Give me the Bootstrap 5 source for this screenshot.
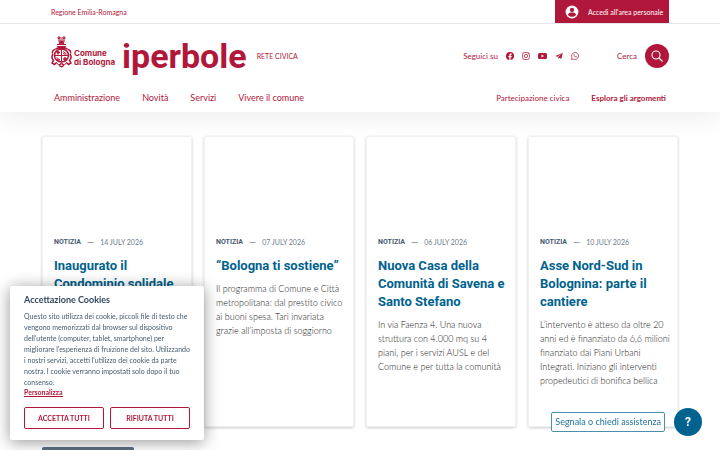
<!DOCTYPE html>
<html lang="it">
<head>
<meta charset="utf-8">
<meta name="viewport" content="width=device-width, initial-scale=1">
<title>Comune di Bologna - Iperbole</title>
<link href="https://cdn.jsdelivr.net/npm/bootstrap@5.3.0/dist/css/bootstrap.min.css" rel="stylesheet">
<style>
:root { --brand: #b1173a; --blue: #00628e; --slate: #455b71; }
body { font-family: Lato, "Open Sans", sans-serif; font-size: 9px; line-height: 14px; color: #5a6470; background: #fff; overflow: hidden; }
a { text-decoration: none; }
.page-wrap { padding: 0 42px; }
.head-inner { padding: 0 51px; }
.slim { border-bottom: 1px solid #e4e6e9; height: 24px; font-size: 7px; }
.slim-link { color: var(--brand); }
.login { background: var(--brand); color: #fff; width: 114px; padding-left: 10px; gap: 9px; }
.site-head { box-shadow: 0 6px 24px rgba(0,0,0,.07); height: 112px; }
.brand-bar { height: 63px; }
.red, .red:hover { color: var(--brand); }
.city { font: 700 8px/9px Inter, sans-serif; color: var(--brand); margin-left: 2px; padding-top: 5px; }
.logo-word { font-family: Roboto, sans-serif; font-size: 34px; line-height: 40px; font-weight: 700; color: var(--brand); margin-left: 7px; }
.civic { font-size: 7px; margin-left: 10px; }
.follow { gap: 8px; }
.follow, .find { font-size: 8px; }
.follow-label { font-size: 8px; }
.socials { gap: 8px; }
.socials a { display: flex; color: var(--brand); }
.find { gap: 8px; margin-left: 38px; }
.find-btn { width: 24px; height: 24px; background: var(--brand); }
.main-nav { gap: 22px; padding: 4px 3px 0; font-size: 9px; }
.minor { font-size: 8px; }
.cards { --bs-gutter-x: 12px; padding-top: 24px; }
.news { min-height: 291px; border: 1px solid #f0f1f2; border-radius: 2px; box-shadow: 0 1px 3px rgba(0,0,0,.2); padding: 98px 4px 0 11px; }
.meta { font-size: 7px; line-height: 14px; gap: 6px; color: #6d7c8b; }
.meta b { font-family: Roboto, sans-serif; color: var(--slate); font-weight: 700; }
.dash { font-size: 9px; }
.news-title { font-family: Roboto, sans-serif; font-size: 13px; line-height: 18px; font-weight: 700; margin: 8px 0 7px; }
.news-title a { color: var(--blue); }
.news-text { color: #222; font-weight: 300; margin: 0; }
.more { background: #5b6f82; width: 92px; height: 24px; border-radius: 2px; margin-top: 20px; }
.cookie { left: 10px; bottom: 10px; width: 194px; padding: 8px 14px 11px; background: #fff; border-radius: 2px; box-shadow: 0 2px 16px rgba(0,0,0,.42); font-size: 7px; line-height: 11px; color: var(--slate); }
.cookie h2 { font-size: 9px; line-height: 12px; font-weight: 700; margin: 0 0 5px; color: #30475e; }
.customise { display: table; font-weight: 700; border-bottom: 1px solid var(--brand); line-height: 8px; }
.choices { gap: 6px; margin-top: 10px; }
.choice { font-size: 7px; line-height: 12px; font-weight: 700; color: var(--brand); border: 1px solid var(--brand); border-radius: 2px; padding: 4px 0; height: 22px; flex: 1 1 0; }
.help { right: 18px; bottom: 14px; gap: 9px; }
.help-label { border: 1px solid #4a90ae; border-radius: 2px; background: #fff; color: #23739a; font-size: 9px; line-height: 18px; padding: 0 3px; }
.help-btn { width: 28px; height: 28px; background: var(--blue); color: #fff; font-weight: 700; font-size: 12px; font-family: Roboto, sans-serif; }
</style>
<script src="https://cdn.jsdelivr.net/npm/bootstrap@5.3.0/dist/js/bootstrap.bundle.min.js"></script>
</head>
<body>
<header class="site-head">
  <div class="slim head-inner d-flex justify-content-between align-items-center">
    <a class="slim-link" href="#">Regione Emilia-Romagna</a>
    <a class="login h-100 d-flex align-items-center" href="#">
      <svg width="14" height="14" viewBox="0 0 24 24"><circle cx="12" cy="12" r="11" fill="#fff"/><circle cx="12" cy="8.5" r="3.7" fill="#b1173a"/><path d="M5 16.5c1.500-3 4-3.500 7-3.500s5.500.5 7 3.500c-1.500 2.300-4 3.500-7 3.500s-5.500-1.200-7-3.500z" fill="#b1173a"/></svg>
      <span>Accedi all'area personale</span>
    </a>
  </div>
  <div class="brand-bar head-inner d-flex justify-content-between align-items-center">
    <div class="d-flex align-items-center">
      <a class="d-flex align-items-center" href="#">
        <svg width="21" height="32" viewBox="0 0 42 64" fill="none" stroke="#b1173a" stroke-width="2" class="mb-2">
          <path d="M14 2h4v3h-4zM24 2h4v3h-4zM14 8h14M16 9l1 7h8l1-7M19 4h4M12 17h18M13 20l3 6h10l3-6"/>
          <path d="M19 11h4v3h-4zM14 24l-5 2M28 24l5 2" stroke-width="3"/>
          <path d="M14 21h14l-2 5h-10z" fill="#b1173a"/>
          <path d="M9 27c-5 0-7 4-6 8M33 27c5 0 7 4 6 8" stroke-width="3"/>
          <ellipse cx="21" cy="39" rx="14" ry="13" stroke-width="3"/>
          <path d="M21 26v26M7 39h28" stroke-width="2"/>
          <path d="M14 30v7M11 33h7M28 42v8M24 46h8" stroke-width="3"/>
          <path d="M24 31l7 5M24 35l5 2M11 43l7 5M12 47l5 2" stroke-width="2"/>
          <path d="M4 36c-4 6-3 9 1 13l-3 5 5 3 4-4M38 36c4 6 3 9-1 13l3 5-5 3-4-4" stroke-width="3"/>
          <path d="M11 53l4 5 6-3 6 3 4-5M16 59l5 3 5-3M18 56h6v5h-6z"/>
        </svg>
        <span class="city">Comune<br>di Bologna</span>
      </a>
      <a class="logo-word" href="#">iperbole</a>
      <span class="civic red">RETE CIVICA</span>
    </div>
    <div class="d-flex align-items-center">
      <div class="follow d-flex align-items-center red">
        <span>Seguici su</span>
        <div class="socials d-flex align-items-center">
          <a href="#" aria-label="Facebook"><svg width="8" height="8" viewBox="0 0 16 16" fill="currentColor"><path d="M16 8.050a8 8 0 1 0-9.250 7.950v-5.620H4.720V8.050h2.030V6.280c0-2.020 1.200-3.130 3.020-3.130.88 0 1.790.16 1.790.16v1.980h-1c-1 0-1.310.62-1.310 1.260v1.500h2.220l-.35 2.330H9.250V16A8 8 0 0 0 16 8.050z"/></svg></a>
          <a href="#" aria-label="Instagram"><svg width="8" height="8" viewBox="0 0 16 16" fill="none" stroke="currentColor" stroke-width="1.500"><rect x="1" y="1" width="14" height="14" rx="4"/><circle cx="8" cy="8" r="3.300"/><circle cx="12.200" cy="3.800" r=".5"/></svg></a>
          <a href="#" aria-label="YouTube"><svg width="9" height="8" viewBox="0 0 18 14"><rect y="1" width="18" height="12" rx="3" fill="currentColor"/><path d="M7 4l5 3-5 3z" fill="#fff"/></svg></a>
          <a href="#" aria-label="Telegram"><svg width="8" height="8" viewBox="0 0 16 16" fill="currentColor"><path d="M15.500 2L.5 7.800l4 1.500L13 4 6.500 10v4l2.300-2.400 3.700 2.600z"/></svg></a>
          <a href="#" aria-label="WhatsApp"><svg width="8" height="8" viewBox="0 0 16 16" fill="none" stroke="currentColor" stroke-width="1.400"><path d="M1 15l1-3.700A7 7 0 1 1 4.700 14z"/><path d="M5.300 4.500c-1 2 3 6.800 5.600 6.300l.8-1.600-1.900-.9-.8.9C8 9 6.900 7.700 6.600 6.900l.7-.8-.8-1.700z" fill="currentColor" stroke="none"/></svg></a>
        </div>
      </div>
      <div class="find d-flex align-items-center red">
        <span>Cerca</span>
        <button class="find-btn btn p-0 rounded-circle border-0 d-flex align-items-center justify-content-center" type="button" aria-label="Cerca"><svg width="12" height="12" viewBox="0 0 24 24" fill="none" stroke="#fff" stroke-width="2.200"><circle cx="10" cy="10" r="8"/><path d="M16 16l7 7"/></svg></button>
      </div>
    </div>
  </div>
  <nav class="head-inner">
    <div class="main-nav d-flex align-items-center">
      <a class="red" href="#">Amministrazione</a>
      <a class="red" href="#">Novità</a>
      <a class="red" href="#">Servizi</a>
      <a class="red" href="#">Vivere il comune</a>
      <a class="red minor ms-auto" href="#">Partecipazione civica</a>
      <a class="red minor fw-bold" href="#">Esplora gli argomenti</a>
    </div>
  </nav>
</header>
<main class="page-wrap">
  <div class="cards row row-cols-4">
    <div class="col"><article class="news h-100">
      <div class="meta d-flex"><b>NOTIZIA</b><span class="dash">—</span><span>14 JULY 2026</span></div>
      <h3 class="news-title"><a href="#">Inaugurato il Condominio solidale</a></h3>
    </article></div>
    <div class="col"><article class="news h-100">
      <div class="meta d-flex"><b>NOTIZIA</b><span class="dash">—</span><span>07 JULY 2026</span></div>
      <h3 class="news-title"><a href="#">“Bologna ti sostiene”</a></h3>
      <p class="news-text">Il programma di Comune e Città metropolitana: dal prestito civico ai buoni spesa. Tari invariata<br>grazie all’imposta di soggiorno</p>
    </article></div>
    <div class="col"><article class="news h-100">
      <div class="meta d-flex"><b>NOTIZIA</b><span class="dash">—</span><span>06 JULY 2026</span></div>
      <h3 class="news-title"><a href="#">Nuova Casa della Comunità di Savena e Santo Stefano</a></h3>
      <p class="news-text">In via Faenza 4. Una nuova struttura con 4.000 mq su 4<br>piani, per i servizi AUSL e del Comune e per tutta la comunità</p>
    </article></div>
    <div class="col"><article class="news h-100">
      <div class="meta d-flex"><b>NOTIZIA</b><span class="dash">—</span><span>10 JULY 2026</span></div>
      <h3 class="news-title"><a href="#">Asse Nord-Sud in Bolognina: parte il cantiere</a></h3>
      <p class="news-text">L’intervento è atteso da oltre 20 anni ed è finanziato da 6,6 milioni finanziato dai Piani Urbani<br>Integrati. Iniziano gli interventi propedeutici di bonifica bellica</p>
    </article></div>
  </div>
  <button class="more btn p-0 border-0 d-block" type="button" aria-label="Tutte le notizie"></button>
</main>
<section class="cookie position-fixed" aria-label="Cookie">
  <h2>Accettazione Cookies</h2>
  <div>Questo sito utilizza dei cookie, piccoli file di testo che vengono memorizzati dal browser sul dispositivo dell'utente (computer, tablet, smartphone) per migliorare l'esperienza di fruizione del sito. Utilizzando i nostri servizi, accetti l'utilizzo dei cookie da parte nostra. I cookie verranno impostati solo dopo il tuo consenso.</div>
  <a class="customise red" href="#">Personalizza</a>
  <div class="choices d-flex">
    <button class="choice btn" type="button">ACCETTA TUTTI</button>
    <button class="choice btn" type="button">RIFIUTA TUTTI</button>
  </div>
</section>
<div class="help position-fixed d-flex align-items-center">
  <a class="help-label" href="#">Segnala o chiedi assistenza</a>
  <button class="help-btn btn p-0 border-0 rounded-circle" type="button">?</button>
</div>
</body>
</html>
